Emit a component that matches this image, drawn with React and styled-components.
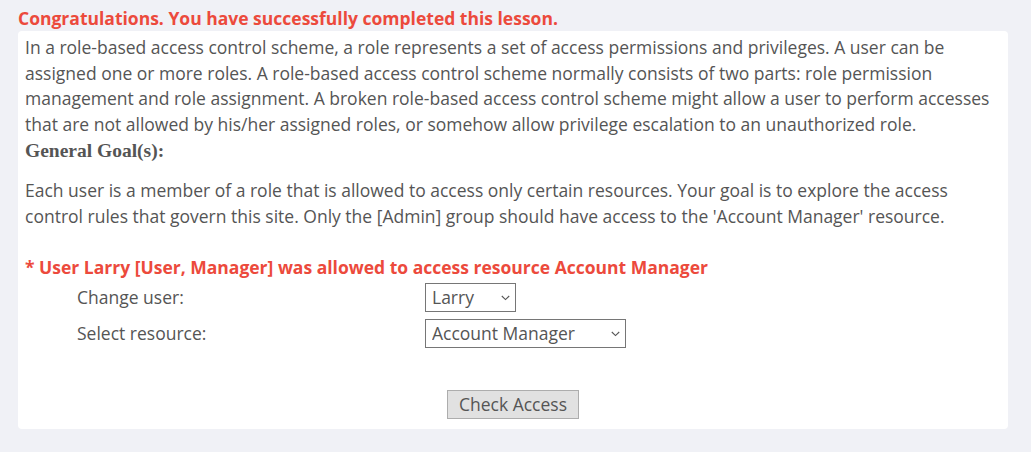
import React from "react";
import styled, { createGlobalStyle } from "styled-components";

const GlobalStyle = createGlobalStyle`
  html, body {
    margin: 0;
    padding: 0;
    background: #f0f1f6;
  }
  body {
    font-family: "Open Sans", "Liberation Sans", sans-serif;
    color: #555;
  }
`;

function Chevron() {
  return (
    <ChevronIcon width="9" height="6" viewBox="0 0 9 6">
      <path d="M0.8 1 L4.5 4.6 L8.2 1" fill="none" stroke="#555" strokeWidth="1.1" />
    </ChevronIcon>
  );
}

function App() {
  const [user, setUser] = React.useState("Larry");
  const [resource, setResource] = React.useState("Account Manager");

  return (
    <Page>
      <GlobalStyle />
      <Feedback>Congratulations. You have successfully completed this lesson.</Feedback>
      <Panel>
        <Text>
          In a role-based access control scheme, a role represents a set of access permissions and privileges. A user can be
          assigned one or more roles. A role-based access control scheme normally consists of two parts: role permission
          management and role assignment. A broken role-based access control scheme might allow a user to perform accesses
          that are not allowed by his/her assigned roles, or somehow allow privilege escalation to an unauthorized role.
        </Text>
        <GoalTitle>General Goal(s):</GoalTitle>
        <Text spaced>
          Each user is a member of a role that is allowed to access only certain resources. Your goal is to explore the access
          control rules that govern this site. Only the [Admin] group should have access to the 'Account Manager' resource.
        </Text>
        <Message>* User Larry [User, Manager] was allowed to access resource Account Manager</Message>
        <Form onSubmit={(e) => e.preventDefault()}>
          <Row>
            <Label>Change user:</Label>
            <SelectWrap width="91px">
              <Select value={user} onChange={(e) => setUser(e.target.value)}>
                <option>Tom</option>
                <option>Jerry</option>
                <option>Larry</option>
                <option>Curly</option>
              </Select>
              <Chevron />
            </SelectWrap>
          </Row>
          <Row>
            <Label>Select resource:</Label>
            <SelectWrap width="201px">
              <Select value={resource} onChange={(e) => setResource(e.target.value)}>
                <option>Public Share</option>
                <option>Time Card Entry</option>
                <option>Performance Review</option>
                <option>Time Card Approval</option>
                <option>Site Manager</option>
                <option>Account Manager</option>
              </Select>
              <Chevron />
            </SelectWrap>
          </Row>
          <ButtonRow>
            <Button type="submit">Check Access</Button>
          </ButtonRow>
        </Form>
      </Panel>
    </Page>
  );
}

export default App;

const Page = styled.div`
  padding: 6px 23px 22px 18px;
`;

const Feedback = styled.div`
  color: #ec4a3c;
  font-weight: 700;
  font-size: 17.5px;
  line-height: 25px;
`;

const Panel = styled.div`
  background: #fff;
  border-radius: 4px;
  padding: 4px 7px 10px 7px;
`;

const Text = styled.p`
  margin: 0 0 ${(p) => (p.spaced ? "24px" : "0")};
  font-size: 17.5px;
  line-height: 25.6px;
  color: #555;
`;

const GoalTitle = styled.h4`
  margin: 0 0 14px;
  font-family: "Liberation Serif", "Times New Roman", serif;
  font-weight: 700;
  font-size: 19.5px;
  line-height: 27px;
  color: #555;
`;

const Message = styled.div`
  color: #ec4a3c;
  font-weight: 700;
  font-size: 17.5px;
  line-height: 26px;
  margin-top: 1px;
`;

const Form = styled.form`
  display: flex;
  flex-direction: column;
  gap: 7px;
  padding-left: 52px;
  margin-top: 3px;
`;

const Row = styled.div`
  display: grid;
  grid-template-columns: 348px auto;
  align-items: center;
`;

const Label = styled.label`
  font-size: 17.5px;
  color: #555;
`;

const SelectWrap = styled.div`
  position: relative;
  width: ${(p) => p.width};
  height: 29px;
`;

const Select = styled.select`
  appearance: none;
  -webkit-appearance: none;
  display: block;
  width: 100%;
  height: 100%;
  box-sizing: border-box;
  font-family: "Open Sans", "Liberation Sans", sans-serif;
  font-size: 17.5px;
  color: #555;
  background: #fff;
  border: 1px solid #767676;
  border-radius: 0;
  padding: 0 20px 0 6px;
  outline: none;
`;

const ChevronIcon = styled.svg`
  position: absolute;
  right: 6px;
  top: 12px;
  pointer-events: none;
`;

const ButtonRow = styled.div`
  display: flex;
  justify-content: center;
  margin-top: 35px;
  margin-left: -52px;
`;

const Button = styled.button`
  width: 132px;
  height: 29px;
  font-family: "Open Sans", "Liberation Sans", sans-serif;
  font-size: 17.5px;
  color: #555;
  background: #e1e1e1;
  border: 1px solid #adadad;
  border-radius: 0;
  padding: 0;
`;
